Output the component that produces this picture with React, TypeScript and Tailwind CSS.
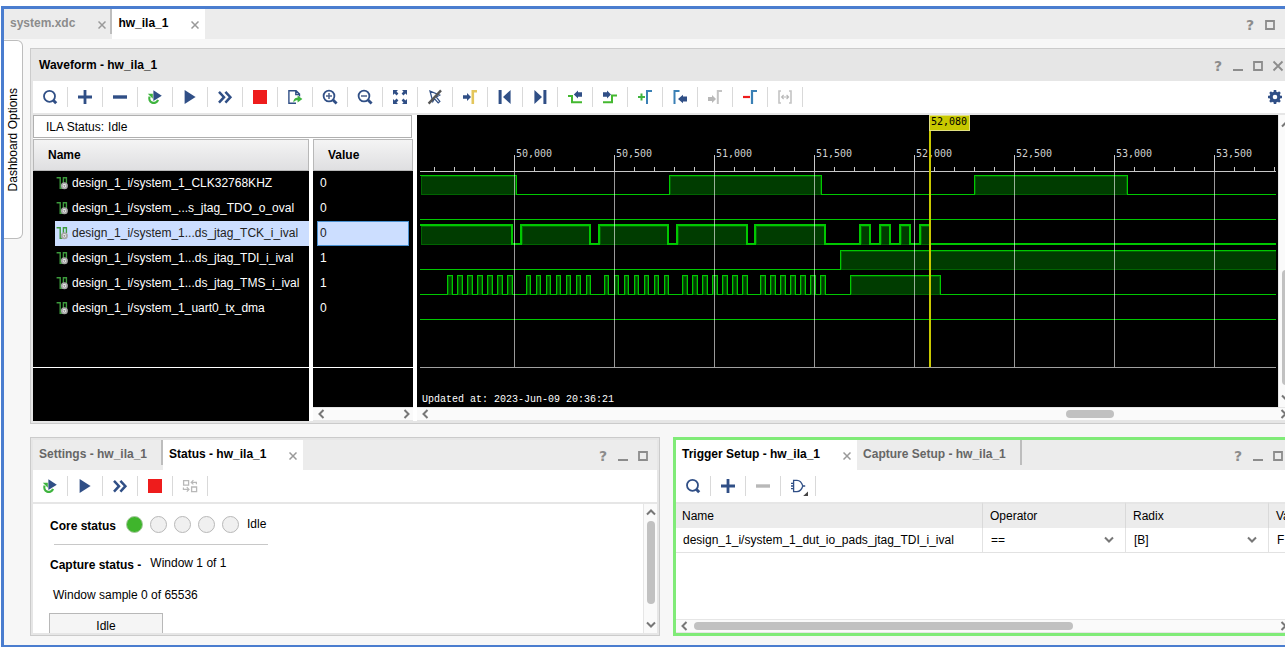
import { useState } from 'react';
import type { ReactNode } from 'react';
import { clsx } from 'clsx';

const NAVY = '#304f86';
const GREEN = '#3fb43f';
const BLUE = '#3a80b5';
const GREY = '#b8b8b8';

/* ---------- icons ---------- */

function Svg({ children }: { children: ReactNode }) {
  return (
    <svg viewBox="0 0 16 16" className="size-4" fill="none" aria-hidden="true">
      {children}
    </svg>
  );
}

const SearchIcon = () => (
  <Svg>
    <circle cx="7.5" cy="7.3" r="5.5" stroke={NAVY} strokeWidth="1.8" />
    <path d="M11.3 11.3 14.2 14.2" stroke={NAVY} strokeWidth="3" />
  </Svg>
);

const PlusIcon = () => (
  <Svg>
    <path d="M1 8h14M8 1v14" stroke={NAVY} strokeWidth="2.8" />
  </Svg>
);

const MinusIcon = ({ color = NAVY }: { color?: string }) => (
  <Svg>
    <path d="M1 8h14" stroke={color} strokeWidth="3.4" />
  </Svg>
);

const RerunIcon = () => (
  <Svg>
    <path d="M2.6 7.6A4.5 4.5 0 1 0 11 10.8" stroke={GREEN} strokeWidth="2.2" />
    <path d="M.8 4.8h5v5z" fill={GREEN} />
    <path d="M6.4 1.2 14.8 6.8 6.4 12z" fill={NAVY} />
  </Svg>
);

const PlayIcon = () => (
  <Svg>
    <path d="M2.6 1 13.6 8 2.6 15z" fill={NAVY} />
  </Svg>
);

const ForwardIcon = () => (
  <Svg>
    <path d="M2 2.8 7 8.2 2 13.6M8.4 2.8l5 5.4-5 5.4" stroke={NAVY} strokeWidth="2.5" />
  </Svg>
);

const StopIcon = () => (
  <Svg>
    <path d="M1 1h14v14H1z" fill="#ee1c1c" />
  </Svg>
);

const ExportIcon = () => (
  <Svg>
    <path d="M9 14.3H1.9V1.7h7.2l3.4 3.4v2.4M8.8 1.9v3.6h3.6" stroke={NAVY} strokeWidth="1.4" />
    <path d="M6.4 13.6c0-3.6 1.8-4.8 4.2-4.8V6.4L15.4 10l-4.8 3.6v-2.3c-1.8 0-3 .6-4.2 2.3z" fill={GREEN} />
  </Svg>
);

const ZoomIcon = ({ plus }: { plus?: boolean }) => (
  <Svg>
    <circle cx="7" cy="7" r="5.4" stroke={NAVY} strokeWidth="1.8" />
    <path d={plus ? 'M4 7h6M7 4v6' : 'M4 7h6'} stroke="#4a5f8a" strokeWidth="1.5" />
    <path d="M10.8 10.8 14.6 14.6" stroke={NAVY} strokeWidth="2.8" />
  </Svg>
);

const FitIcon = () => (
  <Svg>
    <path
      d="M1 1h5L4.5 2.6 6.4 4.6 4.6 6.4 2.6 4.4 1 6zM15 1v5l-1.6-1.6-2 2-1.8-1.8 1.9-2L10 1zM1 15v-5l1.6 1.6 2-2 1.8 1.8-1.9 2L6 15zM15 15h-5l1.5-1.6-1.9-2 1.8-1.8 2 2L15 10z"
      fill={NAVY}
    />
  </Svg>
);

const NoCursorIcon = () => (
  <Svg>
    <path d="M3 2.2 12.6 6 9.2 8l3.6 4.4-1.6 1.5L7.4 9.6l-1.6 3z" stroke={NAVY} strokeWidth="1.3" />
    <path d="M1.6 14.6 14 1.4" stroke="#555" strokeWidth="2.4" />
  </Svg>
);

const GotoCursorIcon = () => (
  <Svg>
    <path d="M1 6.2h4V4L9 8l-4 4V9.8H1z" fill={NAVY} />
    <path d="M10.8 15V2.2H15" stroke="#e3c65c" strokeWidth="2.6" />
  </Svg>
);

const FirstIcon = () => (
  <Svg>
    <path d="M1.6 1h3v14h-3zM13.6 1v14L6 8z" fill={NAVY} />
  </Svg>
);

const LastIcon = () => (
  <Svg>
    <path d="M11.4 1h3v14h-3zM2.4 1v14L10 8z" fill={NAVY} />
  </Svg>
);

const PrevEdgeIcon = () => (
  <Svg>
    <path d="M1 7h4v6.2h10" stroke="#44b830" strokeWidth="2" />
    <path d="M15 3.3h-4V1.6L6.8 5.5 11 9.4V7.7h4z" fill={NAVY} />
  </Svg>
);

const NextEdgeIcon = () => (
  <Svg>
    <path d="M1 13.2h9V6.6h5" stroke="#44b830" strokeWidth="2" />
    <path d="M1 3.3h4V1.6l4 3.9-4 3.9V7.7H1z" fill={NAVY} />
  </Svg>
);

const AddMarkerIcon = () => (
  <Svg>
    <path d="M1 8h7M4.5 4.5v7" stroke={GREEN} strokeWidth="2" />
    <path d="M10 15V2h5" stroke={BLUE} strokeWidth="2" />
  </Svg>
);

const PrevMarkerIcon = () => (
  <Svg>
    <path d="M2.5 15V2h5" stroke={BLUE} strokeWidth="2" />
    <path d="M15 7.6h-4V5.8L6 10l5 4.2v-1.8h4z" fill={NAVY} />
  </Svg>
);

const NextMarkerIcon = () => (
  <Svg>
    <path d="M1 8h4V6l4 4-4 4v-2H1z" fill={GREY} />
    <path d="M10.8 15V2H15" stroke="#c4c4c4" strokeWidth="2" />
  </Svg>
);

const RemoveMarkerIcon = () => (
  <Svg>
    <path d="M1 8h7" stroke="#ee1c1c" strokeWidth="2.2" />
    <path d="M10 15V2h5" stroke={BLUE} strokeWidth="2.2" />
  </Svg>
);

const SpanIcon = () => (
  <Svg>
    <path d="M4 2H2v12h2M12 2h2v12h-2" stroke="#c4c4c4" strokeWidth="1.6" />
    <path d="M4.6 8h7M6.6 6 4.6 8l2 2M9.6 6l2 2-2 2" stroke={GREY} strokeWidth="1.1" />
  </Svg>
);

const SwapIcon = () => (
  <Svg>
    <path d="M1.6 2.6h5v4.6h-5zM9.6 9h5v4.6h-5z" stroke={GREY} strokeWidth="1.3" />
    <path d="M14.4 6.2V4.4H9.6M11.4 2.2 9.2 4.4l2.2 2M1.4 9.6v1.8h5M4.8 9.2 7 11.4l-2.2 2.2" stroke={GREY} strokeWidth="1.2" />
  </Svg>
);

const GateIcon = () => (
  <svg viewBox="0 0 20 20" className="size-5" fill="none" aria-hidden="true">
    <path d="M5.6 4.4h3.4c3 0 5 3 5.8 5.6-.8 2.6-2.8 5.6-5.8 5.6H5.6zM3 7.4h2.6M3 12.6h2.6M14.8 10h2.4M3 10h2.6" stroke={NAVY} strokeWidth="1.3" />
    <path d="M20 15.4v4.6h-4.8z" fill="#444" />
  </svg>
);

const GearIcon = () => (
  <Svg>
    <circle cx="8" cy="8" r="3.9" stroke={NAVY} strokeWidth="3.2" />
    <path
      d="M8 1v3M8 12v3M1 8h3M12 8h3M3.05 3.05l2 2M10.95 10.95l2 2M3.05 12.95l2-2M10.95 5.05l2-2"
      stroke={NAVY}
      strokeWidth="2.6"
    />
  </Svg>
);

const ProbeIcon = () => (
  <svg viewBox="0 0 12 14" className="h-3.5 w-3 shrink-0" fill="none" aria-hidden="true">
    <path d="M.6 1.7h3.6V12.3h2.4M7.4 8V1.7h3V7" stroke="#3c9a3c" strokeWidth="1.4" />
    <circle cx="8.4" cy="9.8" r="2.6" fill="#fff" stroke="#a8a8a8" strokeWidth="1.8" />
    <circle cx="8.4" cy="9.8" r="1.1" fill="#999" />
  </svg>
);

const CHEVRONS = {
  left: 'M7.5 1 3.5 5l4 4',
  right: 'M2.5 1l4 4-4 4',
  up: 'M1 7.5l4-4 4 4',
  down: 'M1 2.5l4 4 4-4',
};

function Chevron({ dir }: { dir: keyof typeof CHEVRONS }) {
  return (
    <svg viewBox="0 0 10 10" className="size-2.5 shrink-0" fill="none" aria-hidden="true">
      <path d={CHEVRONS[dir]} stroke="#777" strokeWidth="2" />
    </svg>
  );
}

/* ---------- shared pieces ---------- */

function IconButton({ label, children }: { label: string; children: ReactNode }) {
  return (
    <button
      type="button"
      aria-label={label}
      title={label}
      className="h-5 w-[35px] grid place-items-center border-r border-[#d9d9d9] shrink-0"
    >
      {children}
    </button>
  );
}

function WindowControls({ items }: { items: Array<'help' | 'min' | 'max' | 'close'> }) {
  return (
    <div className="flex items-center ml-auto pt-0.5">
      {items.map((item) => (
        <button key={item} type="button" aria-label={item} className="size-5 grid place-items-center text-[#8c8c8c]">
          {item === 'help' ? (
            <span className="font-['DejaVu_Sans'] font-bold text-sm leading-5">?</span>
          ) : (
            <svg viewBox="0 0 12 12" className="size-3" fill="none" stroke="currentColor" aria-hidden="true">
              {item === 'min' && <path d="M1 10h10" strokeWidth="2" />}
              {item === 'max' && <path d="M2 2h8v8H2z" strokeWidth="1.8" />}
              {item === 'close' && <path d="M1.5 1.5l9 9M10.5 1.5l-9 9" strokeWidth="1.8" />}
            </svg>
          )}
        </button>
      ))}
    </div>
  );
}

function Tab({ label, active, closable, muted = 'text-[#666]' }: {
  label: string;
  active?: boolean;
  closable?: boolean;
  muted?: string;
}) {
  return (
    <div
      className={clsx(
        'flex items-center gap-[19px] h-full pl-1.5 whitespace-nowrap',
        active ? 'bg-white text-black' : muted,
        closable ? active && 'pr-0.5' : 'pr-3.5',
      )}
    >
      <button type="button" role="tab" aria-selected={!!active} className="font-bold pb-0.5">
        {label}
      </button>
      {closable && (
        <button type="button" aria-label={`Close ${label}`} className="w-4 h-full grid place-items-center pt-0.5">
          <svg viewBox="0 0 8 8" className="size-2" fill="none" aria-hidden="true">
            <path d="M.5.5l7 7M7.5.5l-7 7" stroke="#999" strokeWidth="1.5" />
          </svg>
        </button>
      )}
    </div>
  );
}

const TabDivider = () => <div className="w-0.5 h-[25px] self-start bg-[#bdbdbd] shrink-0" />;

/* ---------- waveform ---------- */

type Span = [number, number];

const END = 6000;

const pulses = (start: number, width: number): Span[] =>
  Array.from({ length: 7 }, (_, i) => [start + i * 10, start + i * 10 + width]);

const SIGNALS: { name: string; value: string; high: Span[] }[] = [
  { name: 'design_1_i/system_1_CLK32768KHZ', value: '0', high: [[0, 96], [249, 401], [554, 707]] },
  { name: 'design_1_i/system_...s_jtag_TDO_o_oval', value: '0', high: [] },
  {
    name: 'design_1_i/system_1...ds_jtag_TCK_i_ival',
    value: '0',
    high: [[0, 92], [101, 170], [179, 248], [257, 327], [335, 405], [440, 450], [460, 470], [480, 490], [500, 510]],
  },
  { name: 'design_1_i/system_1...ds_jtag_TDI_i_ival', value: '1', high: [[420, END]] },
  {
    name: 'design_1_i/system_1...ds_jtag_TMS_i_ival',
    value: '1',
    high: [...pulses(27, 5), ...pulses(106, 4), ...pulses(184, 4), ...pulses(262, 5), ...pulses(340, 5), [430, 520]],
  },
  { name: 'design_1_i/system_1_uart0_tx_dma', value: '0', high: [] },
];

const MAJOR = ['50,000', '50,500', '51,000', '51,500', '52,000', '52,500', '53,000', '53,500'];
const majorX = (i: number) => 94 + i * 100;

function Trace({ high, row, bold }: { high: Span[]; row: number; bold: boolean }) {
  const top = 60 + row * 25;
  const o = bold ? 0 : 0.5;
  const hi = top + o;
  const lo = top + 19 + o;

  let d = high[0]?.[0] === 0 ? '' : `M0 ${lo}`;
  high.forEach(([a, b]) => {
    d += a === 0 ? `M0 ${hi}` : `H${a + o}V${hi}`;
    d += `H${b + o}V${lo}`;
  });
  d += `H${END}`;

  return (
    <g fill="none">
      {high.map(([a, b]) => (
        <rect key={a} x={a + 1.5} y={top + 1.5} width={b - a - 2} height={18} fill="#003c00" stroke="#006400" />
      ))}
      <path d={d} stroke="#00c800" strokeWidth={bold ? 2 : 1} />
    </g>
  );
}

function WaveCanvas({ selected }: { selected: number }) {
  return (
    <svg
      role="img"
      aria-label="Captured waveforms"
      className="block size-full font-['DejaVu_Sans_Mono',monospace] text-[10px]"
      shapeRendering="crispEdges"
    >
      {SIGNALS.map((s, i) => (
        <Trace key={s.name} high={s.high} row={i} bold={i === selected} />
      ))}
      <path d={`M0 56.5H${END}`} stroke="#c8c8c8" />
      {Array.from({ length: 60 }, (_, i) => (
        <path key={i} d={`M${14.5 + i * 20} 52v4`} stroke="#c8c8c8" />
      ))}
      {MAJOR.map((label, i) => (
        <g key={label}>
          <path d={`M${majorX(i) + 0.5} 40v16`} stroke="#c8c8c8" />
          <path d={`M${majorX(i) + 0.5} 57v195`} stroke="#fff" strokeOpacity=".6" />
          <text x={majorX(i) + 2} y="42" fill="#d0d0d0">
            {label}
          </text>
        </g>
      ))}
      <path d={`M0 252.5H${END}`} stroke="#a0a0a0" />
      <path d="M510 16v236" stroke="#c8c800" strokeWidth="2" />
      <path d="M509.5 0.5h40v15h-40z" fill="#c8c800" stroke="#e0e080" />
      <text x="511" y="10" fill="#000">
        52,080
      </text>
      <text x="2" y="287" fill="#fff" className="font-['Liberation_Mono',monospace]">
        Updated at: 2023-Jun-09 20:36:21
      </text>
    </svg>
  );
}

function SignalTable({ selected, onSelect }: { selected: number; onSelect: (i: number) => void }) {
  return (
    <div className="w-[380px] shrink-0 flex flex-col">
      <div className="h-[23px] mr-px mb-px border border-[#b0b0b0] bg-white flex items-center gap-1 px-3">
        <span>ILA Status:</span>
        <span>Idle</span>
      </div>
      <table className="w-full table-fixed border-separate border-spacing-0 text-left">
        <thead>
          <tr className="h-8">
            <th className="p-0">
              <div className="h-8 flex items-center pl-3.5 border border-[#b8b8b8] bg-linear-to-b from-[#f4f4f4] to-[#dfdfe1]">
                Name
              </div>
            </th>
            <th className="w-[104px] p-0 border-l-4 border-white">
              <div className="h-8 flex items-center pl-3.5 border border-[#b8b8b8] bg-linear-to-b from-[#f4f4f4] to-[#dfdfe1]">
                Value
              </div>
            </th>
          </tr>
        </thead>
        <tbody className="bg-black text-white">
          {SIGNALS.map((s, i) => (
            <tr key={s.name} className="h-[25px] cursor-default" onClick={() => onSelect(i)}>
              <td className="p-0 pl-[22px]">
                <div className={clsx('h-[25px] flex items-center gap-1 pl-px pb-0.5 whitespace-nowrap', i === selected && 'bg-[#ccdeff] text-[#222]')}>
                  <ProbeIcon />
                  {s.name}
                </div>
              </td>
              <td className="p-0 px-1 border-l-4 border-white">
                <div className={clsx('h-[25px] flex items-center pl-0.5 pb-0.5 border', i === selected ? 'bg-[#ccdeff] border-[#4a90d0] text-[#222]' : 'border-black')}>
                  {s.value}
                </div>
              </td>
            </tr>
          ))}
        </tbody>
      </table>
      <div className="flex-1 flex gap-1">
        <div className="flex-1 bg-black pt-[46px]">
          <div className="h-px bg-white" />
        </div>
        <div className="w-[100px] flex flex-col">
          <div className="flex-1 bg-black pt-[46px]">
            <div className="h-px bg-white" />
          </div>
          <div className="h-3.5 bg-[#fafafa] border-y border-[#e6e6e6] flex items-center justify-between pl-[3px] pr-px">
            <Chevron dir="left" />
            <Chevron dir="right" />
          </div>
        </div>
      </div>
    </div>
  );
}

function WaveformPanel() {
  const [selected, setSelected] = useState(2);

  return (
    <section className="flex-1 min-h-0 flex flex-col border border-[#cbcbcb] bg-[#e6e6e6] px-0.5 pb-0.5">
      <header className="h-8 shrink-0 flex items-center pl-1.5 pr-1">
        <h2 className="font-bold">Waveform - hw_ila_1</h2>
        <WindowControls items={['help', 'min', 'max', 'close']} />
      </header>

      <div className="h-8 shrink-0 flex items-center bg-white mb-0.5">
        <IconButton label="Find"><SearchIcon /></IconButton>
        <IconButton label="Add"><PlusIcon /></IconButton>
        <IconButton label="Remove"><MinusIcon /></IconButton>
        <IconButton label="Auto re-trigger"><RerunIcon /></IconButton>
        <IconButton label="Run trigger"><PlayIcon /></IconButton>
        <IconButton label="Run trigger immediate"><ForwardIcon /></IconButton>
        <IconButton label="Stop trigger"><StopIcon /></IconButton>
        <IconButton label="Export data"><ExportIcon /></IconButton>
        <IconButton label="Zoom in"><ZoomIcon plus /></IconButton>
        <IconButton label="Zoom out"><ZoomIcon /></IconButton>
        <IconButton label="Zoom fit"><FitIcon /></IconButton>
        <IconButton label="Snap off"><NoCursorIcon /></IconButton>
        <IconButton label="Go to cursor"><GotoCursorIcon /></IconButton>
        <IconButton label="Go to start"><FirstIcon /></IconButton>
        <IconButton label="Go to end"><LastIcon /></IconButton>
        <IconButton label="Previous transition"><PrevEdgeIcon /></IconButton>
        <IconButton label="Next transition"><NextEdgeIcon /></IconButton>
        <IconButton label="Add marker"><AddMarkerIcon /></IconButton>
        <IconButton label="Previous marker"><PrevMarkerIcon /></IconButton>
        <IconButton label="Next marker"><NextMarkerIcon /></IconButton>
        <IconButton label="Remove marker"><RemoveMarkerIcon /></IconButton>
        <IconButton label="Swap cursors"><SpanIcon /></IconButton>
        <button type="button" aria-label="Settings" className="ml-auto mr-[9px]">
          <GearIcon />
        </button>
      </div>

      <div className="flex-1 min-h-0 flex gap-1 bg-white">
        <SignalTable selected={selected} onSelect={setSelected} />
        <div className="flex-1 min-w-0 flex flex-col">
          <div className="flex-1 min-h-0 flex">
            <div className="flex-1 min-w-0 bg-black pl-[3px] pr-0.5">
              <WaveCanvas selected={selected} />
            </div>
            <div className="w-3.5 bg-[#fafafa] border-l border-[#e6e6e6] flex flex-col items-center py-1">
              <Chevron dir="up" />
              <div className="flex-1" />
              <div className="w-2 h-[115px] rounded-full bg-[#c1c1c1] mb-2" />
              <Chevron dir="down" />
            </div>
          </div>
          <div className="h-3.5 shrink-0 bg-[#fafafa] border-y border-[#e6e6e6] flex items-center px-[3px]">
            <Chevron dir="left" />
            <div className="flex-1" />
            <div className="w-12 h-2 rounded-full bg-[#c1c1c1] mr-[165px]" />
            <Chevron dir="right" />
          </div>
        </div>
      </div>
    </section>
  );
}

/* ---------- lower panels ---------- */

function StatusPanel() {
  return (
    <section className="min-w-0 min-h-0 flex flex-col border border-[#cbcbcb] bg-[#e6e6e6] p-0.5">
      <header role="tablist" className="h-[30px] shrink-0 flex items-center bg-[#ececec] pr-1">
        <Tab label="Settings - hw_ila_1" />
        <TabDivider />
        <Tab label="Status - hw_ila_1" active closable />
        <WindowControls items={['help', 'min', 'max']} />
      </header>

      <div className="h-8 shrink-0 flex items-center bg-white mb-0.5">
        <IconButton label="Auto re-trigger"><RerunIcon /></IconButton>
        <IconButton label="Run trigger"><PlayIcon /></IconButton>
        <IconButton label="Run trigger immediate"><ForwardIcon /></IconButton>
        <IconButton label="Stop trigger"><StopIcon /></IconButton>
        <IconButton label="Swap"><SwapIcon /></IconButton>
      </div>

      <div className="flex-1 min-h-0 flex bg-white">
        <div className="flex-1 min-h-0 overflow-hidden pl-4 pt-2">
          <div className="flex items-center h-6 pl-px">
            <span className="font-bold w-[76px] pt-1">Core status</span>
            <div className="flex gap-[7px]">
              {[0, 1, 2, 3, 4].map((i) => (
                <span
                  key={i}
                  className={clsx('size-[17px] rounded-full border', i === 0 ? 'bg-[#3fb52c] border-[#a8c8a0]' : 'bg-[#f0f0f0] border-[#b8b8b8]')}
                />
              ))}
            </div>
            <span className="pl-2">Idle</span>
          </div>
          <div className="ml-[5px] mt-2 w-[214px] h-px bg-[#c8c8c8]" />
          <div className="flex items-center gap-[9px] h-5 mt-2 pl-px">
            <span className="font-bold pt-1">Capture status -</span>
            <span>Window 1 of 1</span>
          </div>
          <p className="mt-3 h-5 leading-5 pl-1">Window sample 0 of 65536</p>
          <div className="mt-2 w-[114px] h-[25px] border border-[#b8b8b8] bg-[#f5f5f5] grid place-items-center">Idle</div>
        </div>
        <div className="w-3.5 shrink-0 bg-[#fafafa] border-l border-[#e6e6e6] flex flex-col items-center py-[3px]">
          <Chevron dir="up" />
          <div className="w-2 h-[83px] rounded-full bg-[#c1c1c1] mt-1" />
          <div className="flex-1" />
          <Chevron dir="down" />
        </div>
      </div>
    </section>
  );
}

function CellSelect({ label, value }: { label: string; value: string }) {
  return (
    <div className="flex items-center pr-[11px]">
      <select aria-label={label} defaultValue={value} className="appearance-none flex-1 bg-transparent outline-none">
        <option>{value}</option>
      </select>
      <Chevron dir="down" />
    </div>
  );
}

function TriggerPanel() {
  return (
    <section className="min-w-0 min-h-0 flex flex-col border-3 border-[#80eb78] bg-white">
      <header role="tablist" className="h-[30px] shrink-0 flex items-center bg-[#ececec] pr-1">
        <Tab label="Trigger Setup - hw_ila_1" active closable />
        <Tab label="Capture Setup - hw_ila_1" />
        <TabDivider />
        <WindowControls items={['help', 'min', 'max']} />
      </header>

      <div className="h-8 shrink-0 flex items-center">
        <IconButton label="Find"><SearchIcon /></IconButton>
        <IconButton label="Add probe"><PlusIcon /></IconButton>
        <IconButton label="Remove probe"><MinusIcon color={GREY} /></IconButton>
        <IconButton label="Trigger condition"><GateIcon /></IconButton>
      </div>

      <div className="flex-1 min-h-0 overflow-hidden">
        <table className="w-[980px] table-fixed border-separate border-spacing-0 text-left">
          <thead className="bg-[#ececec]">
            <tr className="h-[26px]">
              <th className="w-[307px] font-normal p-0 pl-1.5 border-t-2 border-r border-t-[#e6e6e6] border-r-[#d9d9d9]">Name</th>
              <th className="w-[143px] font-normal p-0 pl-[7px] border-t-2 border-r border-t-[#e6e6e6] border-r-[#d9d9d9]">Operator</th>
              <th className="w-[143px] font-normal p-0 pl-[7px] border-t-2 border-r border-t-[#e6e6e6] border-r-[#d9d9d9]">Radix</th>
              <th className="font-normal p-0 pl-[7px] border-t-2 border-t-[#e6e6e6]">Value</th>
            </tr>
          </thead>
          <tbody>
            <tr className="h-[25px]">
              <td className="p-0 pl-[7px] border-b border-r border-[#e2e2e2] whitespace-nowrap">
                design_1_i/system_1_dut_io_pads_jtag_TDI_i_ival
              </td>
              <td className="p-0 pl-2 border-b border-r border-[#e2e2e2]">
                <CellSelect label="Operator" value="==" />
              </td>
              <td className="p-0 pl-2 border-b border-r border-[#e2e2e2]">
                <CellSelect label="Radix" value="[B]" />
              </td>
              <td className="p-0 pl-2 border-b border-[#e2e2e2]">F</td>
            </tr>
          </tbody>
        </table>
      </div>

      <div className="h-3.5 shrink-0 bg-[#fafafa] border-y border-[#e6e6e6] flex items-center px-[3px]">
        <Chevron dir="left" />
        <div className="w-[379px] h-2 rounded-full bg-[#c1c1c1] ml-[5px]" />
        <div className="flex-1" />
        <Chevron dir="right" />
      </div>
    </section>
  );
}

export default function App() {
  return (
    <div className="h-screen overflow-hidden bg-white pt-1.5 pl-px font-['Liberation_Sans',Arial,sans-serif] text-xs text-black">
      <div className="h-full flex flex-col overflow-hidden bg-[#f7f7f7] border-t-3 border-l-3 border-b-2 border-[#4a7dcf]">
        <header role="tablist" className="h-[30px] shrink-0 flex items-center bg-[#ececec] pr-[5px]">
          <Tab label="system.xdc" closable muted="text-[#8c8c8c]" />
          <TabDivider />
          <Tab label="hw_ila_1" active closable />
          <WindowControls items={['help', 'max']} />
        </header>

        <div className="flex-1 min-h-0 flex">
          <div className="w-[26px] shrink-0 pt-px">
            <button
              type="button"
              className="w-[19px] h-[199px] grid place-items-center bg-white border border-l-0 border-[#bdbdbd] rounded-r-md"
            >
              <span className="[writing-mode:vertical-rl] rotate-180 leading-4">Dashboard Options</span>
            </button>
          </div>

          {/* panels run on past the right edge of the window */}
          <main className="flex-1 min-w-0 -mr-2.5 py-[9px] flex flex-col gap-[13px]">
            <WaveformPanel />
            <div className="h-[199px] shrink-0 grid grid-rows-1 grid-cols-[630fr_622fr] gap-[13px]">
              <StatusPanel />
              <TriggerPanel />
            </div>
          </main>
        </div>
      </div>
    </div>
  );
}
